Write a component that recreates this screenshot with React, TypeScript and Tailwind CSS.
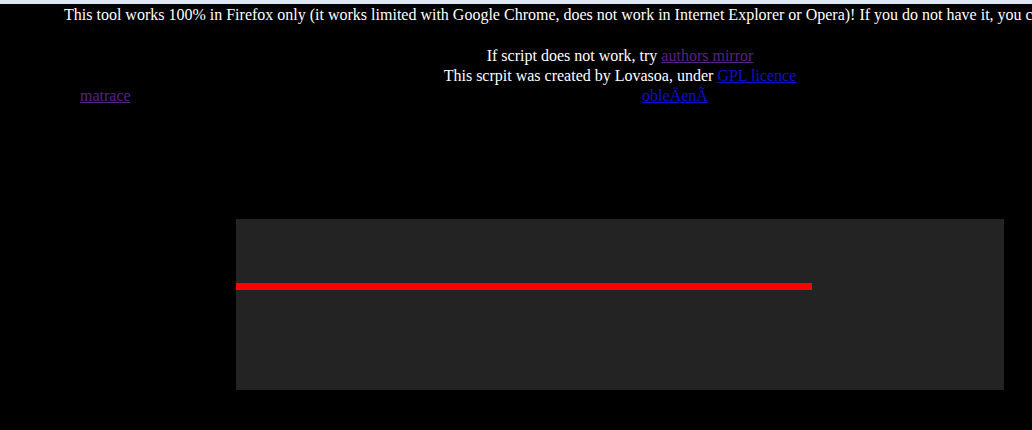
export default function App() {
  const serif = { fontFamily: '"Liberation Serif", "Times New Roman", serif' };

  return (
    <main className="min-h-screen bg-black text-white text-[16px] leading-[20px]" style={serif}>
      <div className="h-[4px] bg-[#dfe8f4]" />

      <div className="overflow-hidden whitespace-nowrap pt-[1px] pl-[64px]">
        This tool works 100% in Firefox only (it works limited with Google Chrome, does not work in
        Internet Explorer or Opera)! If you do not have it, you can download it for free.
      </div>

      <div className="mt-[21px] pl-[208px] text-center">
        <div>
          If script does not work, try{" "}
          <a href="#" className="text-[#55228b] underline">
            authors mirror
          </a>
        </div>
        <div>
          This scrpit was created by Lovasoa, under{" "}
          <a href="#" className="text-[#1010c8] underline">
            GPL licence
          </a>
        </div>
      </div>

      <div className="flex">
        <div className="w-[318px] pl-[80px]">
          <a href="#" className="text-[#55228b] underline">
            matrace
          </a>
        </div>
        <div className="flex-1 text-center">
          <a href="#" className="text-[#1010c8] underline">
            obleÄenÃ
          </a>
        </div>
      </div>

      <div className="ml-[236px] mt-[113px] h-[171px] w-[768px] bg-[#232323] pt-[64px]">
        <div className="h-[7px] w-[576px] bg-[#ff0000]" />
      </div>
    </main>
  );
}
